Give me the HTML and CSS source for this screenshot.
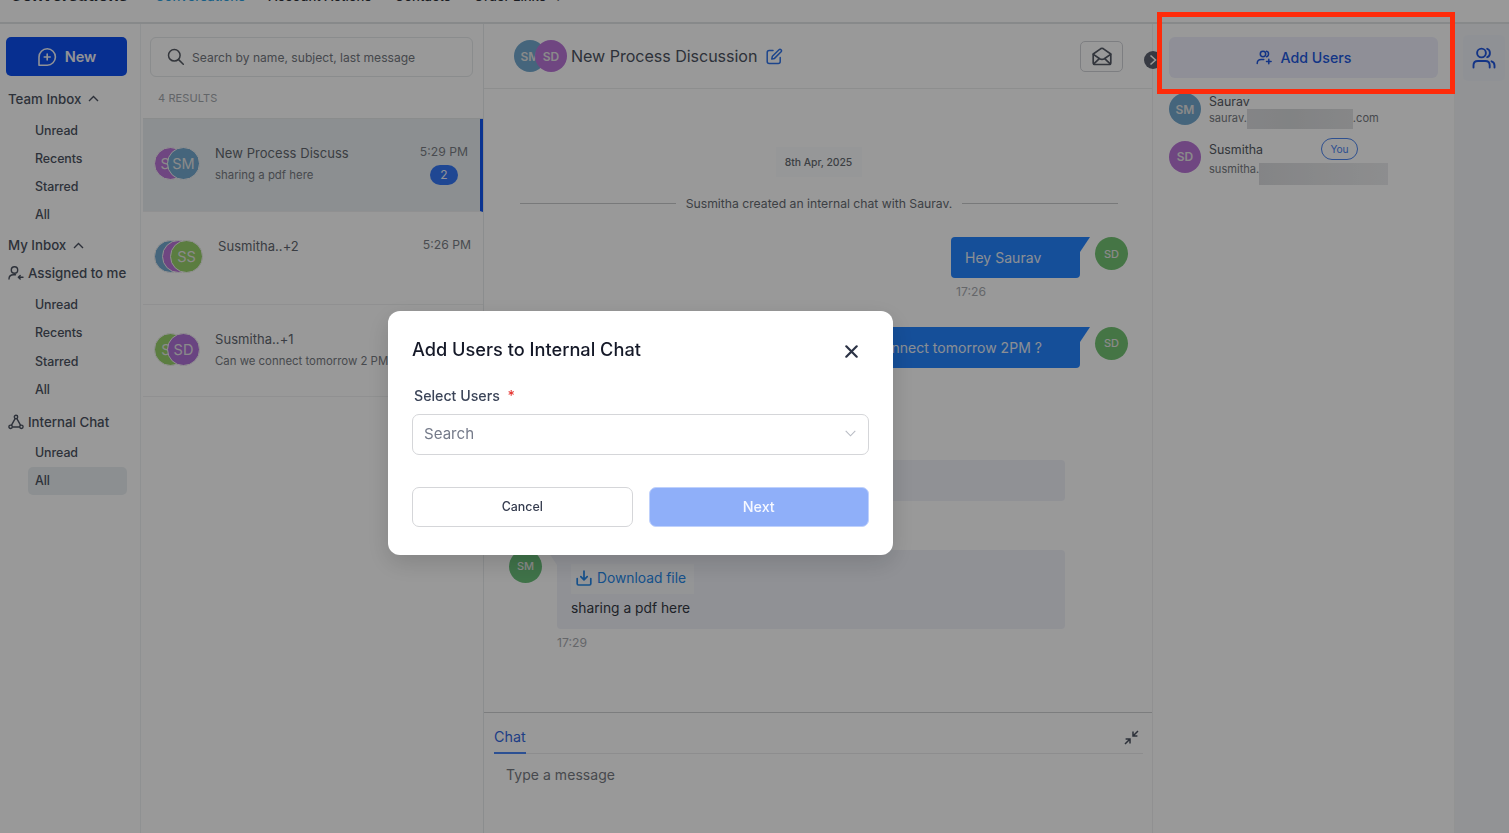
FILE: index.html
```html
<!DOCTYPE html>
<html lang="en">

<head>
  <meta charset="UTF-8">
  <meta name="viewport" content="width=device-width, initial-scale=1.0">
  <title>Conversations</title>
  <link rel="stylesheet" href="styles.css">
</head>

<body>
  <header class="topbar">
    <span class="brand">Conversations</span>
    <nav class="topnav">
      <a class="current">Conversations</a>
      <a>Account Actions</a>
      <a>Contacts</a>
      <a>Order Links &nbsp;⌄</a>
    </nav>
  </header>

  <div class="app">
    <aside class="sidebar">
      <button class="new-btn">
        <svg width="20" height="20" viewBox="0 0 20 20" fill="none" stroke="currentColor" stroke-width="1.6" stroke-linecap="round" stroke-linejoin="round">
          <path d="M2 18.2V10A8.200 8.200 0 1 1 10.200 18.200z" />
          <path d="M10.2 7v6M7.200 10h6" />
        </svg>
        New
      </button>

      <h3>Team Inbox
        <svg class="caret" width="11" height="7" viewBox="0 0 11 7"><path d="M1 6l4.500-4.500L10 6" /></svg>
      </h3>
      <ul>
        <li>Unread</li>
        <li>Recents</li>
        <li>Starred</li>
        <li>All</li>
      </ul>

      <h3 class="my-inbox">My Inbox
        <svg class="caret" width="11" height="7" viewBox="0 0 11 7"><path d="M1 6l4.500-4.500L10 6" /></svg>
      </h3>
      <h3 class="with-icon">
        <svg width="16" height="16" viewBox="0 0 16 16" fill="none" stroke="currentColor" stroke-width="1.4" stroke-linecap="round" stroke-linejoin="round">
          <circle cx="6.500" cy="5" r="3.200" />
          <path d="M1 14c0-2.800 1.700-4.200 4.500-4.200h2M15 12.200h-4.500M12.200 10.400l-1.900 1.800 1.900 1.800" />
        </svg>
        Assigned to me
      </h3>
      <ul>
        <li>Unread</li>
        <li>Recents</li>
        <li>Starred</li>
        <li>All</li>
      </ul>

      <h3 class="with-icon internal">
        <svg width="16" height="16" viewBox="0 0 16 16" fill="none" stroke="currentColor" stroke-width="1.4">
          <circle cx="8" cy="3" r="1.700" />
          <circle cx="2.600" cy="12.800" r="1.700" />
          <circle cx="13.400" cy="12.800" r="1.700" />
          <path d="M7.100 4.600l-3.700 6.700M8.900 4.600l3.700 6.700M4.300 13h7.400" />
        </svg>
        Internal Chat
      </h3>
      <ul>
        <li>Unread</li>
        <li class="active">All</li>
      </ul>
    </aside>

    <section class="threads">
      <div class="search">
        <svg width="18" height="18" viewBox="0 0 18 18" fill="none" stroke="currentColor" stroke-width="1.500" stroke-linecap="round">
          <circle cx="7.300" cy="7.300" r="5.800" />
          <path d="M11.600 11.600l4.700 4.700" />
        </svg>
        Search by name, subject, last message
      </div>
      <div class="results">4 RESULTS</div>

      <div class="thread selected">
        <div class="stack">
          <span class="avatar purple">SD</span>
          <span class="avatar blue">SM</span>
        </div>
        <div class="thread-text">
          <div class="name">New Process Discuss</div>
          <div class="preview">sharing a pdf here</div>
        </div>
        <div class="meta">
          <span>5:29 PM</span>
          <span class="count">2</span>
        </div>
      </div>

      <div class="thread">
        <div class="stack tight">
          <span class="avatar blue"></span>
          <span class="avatar purple"></span>
          <span class="avatar green">SS</span>
        </div>
        <div class="thread-text">
          <div class="name">Susmitha..+2</div>
        </div>
        <div class="meta"><span>5:26 PM</span></div>
      </div>

      <div class="thread">
        <div class="stack">
          <span class="avatar green">SS</span>
          <span class="avatar violet">SD</span>
        </div>
        <div class="thread-text">
          <div class="name">Susmitha..+1</div>
          <div class="preview">Can we connect tomorrow 2 PM to discuss</div>
        </div>
      </div>
    </section>

    <main class="chat">
      <div class="chat-head">
        <span class="avatar blue">SM</span>
        <span class="avatar purple">SD</span>
        <h1>New Process Discussion</h1>
        <svg class="edit" width="17" height="17" viewBox="0 0 17 17" fill="none" stroke="currentColor" stroke-width="1.500" stroke-linecap="round" stroke-linejoin="round">
          <path d="M7 2.500H3.200C2 2.500 1.200 3.300 1.200 4.500v9c0 1.200.8 2 2 2h9c1.200 0 2-.8 2-2V9.500" />
          <path d="M5.800 11l.6-2.800 6.600-6.500c1.400-1.200 3.300.7 2.100 2.100L8.500 10.400z" />
        </svg>
        <button class="mail-btn">
          <svg width="20" height="19" viewBox="0 0 20 19" fill="none" stroke="currentColor" stroke-width="1.700" stroke-linecap="round" stroke-linejoin="round">
            <path d="M1.200 7L8.900 1.600c.7-.4 1.500-.4 2.200 0L18.800 7v8.800c0 1-.7 1.700-1.700 1.700H2.900c-1 0-1.700-.7-1.700-1.700z" />
            <path d="M1.400 7.400l6.300 4.300c1.500.9 3.100.9 4.600 0l6.300-4.300M1.800 16.800l5.500-5.200M18.200 16.800l-5.500-5.200" />
          </svg>
        </button>
        <span class="toggle">
          <svg width="8" height="12" viewBox="0 0 8 12" fill="none" stroke="currentColor" stroke-width="1.600"><path d="M1.500 1.500L6.500 6l-5 4.500" /></svg>
        </span>
      </div>

      <div class="messages">
        <div class="date">8th Apr, 2025</div>
        <div class="system">Susmitha created an internal chat with Saurav.</div>

        <div class="msg out">
          <div>
            <div class="bubble">Hey Saurav</div>
            <div class="time">17:26</div>
          </div>
          <span class="avatar leaf">SD</span>
        </div>
        <div class="msg out">
          <div>
            <div class="bubble">Can we connect tomorrow 2PM ?</div>
            <div class="time">17:26</div>
          </div>
          <span class="avatar leaf">SD</span>
        </div>
        <div class="msg in">
          <span class="avatar mint"></span>
          <div>
            <div class="bubble"></div>
          </div>
        </div>
        <div class="msg in">
          <span class="avatar mint">SM</span>
          <div>
            <div class="bubble file">
              <a class="download">
                <svg width="16" height="17" viewBox="0 0 16 17" fill="none" stroke="currentColor" stroke-width="1.700" stroke-linecap="round" stroke-linejoin="round">
                  <path d="M1.200 8.500v5.200c0 .8.500 1.300 1.300 1.300h11c.8 0 1.300-.5 1.300-1.300V8.500M8 1.200v8.300M4.800 6.700L8 9.900l3.200-3.200" />
                </svg>
                Download file
              </a>
              <div>sharing a pdf here</div>
            </div>
            <div class="time">17:29</div>
          </div>
        </div>
      </div>

      <div class="composer">
        <div class="tabs">
          <span class="tab">Chat</span>
          <svg width="15" height="15" viewBox="0 0 15 15" fill="none" stroke="currentColor" stroke-width="1.500">
            <path d="M14 1L9 6M9 1.600V6h4.400M1 14l5-5M1.600 9H6v4.400" />
          </svg>
        </div>
        <div class="input">Type a message</div>
      </div>
    </main>

    <section class="users">
      <button class="add-btn">
        <svg width="17" height="16" viewBox="0 0 17 16" fill="none" stroke="currentColor" stroke-width="1.500" stroke-linecap="round">
          <circle cx="7" cy="4" r="2.700" />
          <path d="M1.200 13.500c0-2.600 1.500-4 4-4h2.600M10.500 1.300c2.700.5 2.700 4.900 0 5.400M12.800 9.200v4.600M10.500 11.500h4.600" />
        </svg>
        Add Users
      </button>
      <div class="user">
        <span class="avatar blue">SM</span>
        <div>
          <div class="user-name">Saurav</div>
          <div class="email">saurav.<span class="mask"></span>.com</div>
        </div>
      </div>
      <div class="user second">
        <span class="avatar purple">SD</span>
        <div>
          <div class="user-name">Susmitha <span class="you">You</span></div>
          <div class="email">susmitha.<span class="mask wide"></span></div>
        </div>
      </div>
    </section>

    <aside class="rail">
      <span class="rail-btn">
        <svg width="24" height="22" viewBox="0 0 24 22" fill="none" stroke="currentColor" stroke-width="1.900" stroke-linecap="round">
          <circle cx="9.500" cy="6" r="4.400" />
          <path d="M1.500 20.500v-2.200c0-2.700 1.700-4.300 4.400-4.300h7.400c2.700 0 4.400 1.600 4.400 4.300v2.200M15.200 1.800c3.600 1 3.600 7.400 0 8.400M19.500 14.300c1.900.6 3 2 3 4.200v2" />
        </svg>
      </span>
    </aside>
  </div>

  <div class="overlay">
    <div class="modal">
      <div class="modal-head">
        <h2>Add Users to Internal Chat</h2>
        <svg width="13" height="13" viewBox="0 0 13 13" stroke="currentColor" stroke-width="2.200" stroke-linecap="round"><path d="M1.300 1.300l10.400 10.400M11.700 1.300L1.300 11.700" /></svg>
      </div>
      <label>Select Users <b>*</b></label>
      <div class="select">
        Search
        <svg width="11" height="7" viewBox="0 0 11 7" fill="none" stroke="currentColor" stroke-width="1.100"><path d="M.7.8l4.800 5 4.800-5" /></svg>
      </div>
      <div class="actions">
        <button class="cancel">Cancel</button>
        <button class="next">Next</button>
      </div>
    </div>
  </div>
  <div class="highlight"></div>
</body>

</html>
```
FILE: styles.css
```css
* {
  box-sizing: border-box;
}

body {
  margin: 0;
  height: 833px;
  overflow: hidden;
  display: flex;
  flex-direction: column;
  background: #fff;
  color: #4c5361;
  font-family: Inter, "Liberation Sans", sans-serif;
  font-size: 13px;
}

h1, h2, h3, ul {
  margin: 0;
  padding: 0;
  font-weight: 500;
}

button {
  font-family: inherit;
  border: none;
  display: flex;
  align-items: center;
  justify-content: center;
}

svg {
  flex: none;
}

/* top bar, scrolled mostly out of view */
.topbar {
  height: 24px;
  flex: none;
  display: flex;
  border-bottom: 2px solid #e2e5e6;
  line-height: 20px;
  padding-left: 10px;
  overflow: hidden;
  color: #2c3038;
}

.brand {
  width: 145px;
  font-size: 16.6px;
  font-weight: 700;
  margin-top: -15px;
}

.topnav {
  display: flex;
  gap: 23px;
  font-size: 13.1px;
  font-weight: 500;
  margin-top: -14px;
}

.topnav .current {
  color: #2b9fe0;
}

.app {
  flex: 1;
  display: grid;
  grid-template-columns: 141px 343px 669px 302px 54px;
  min-height: 0;
}

/* sidebar */
.sidebar {
  padding: 13px 13px 0 6px;
  border-right: 1px solid #eff2f3;
}

.new-btn {
  width: 121px;
  height: 39px;
  gap: 8px;
  background: #0c4ff0;
  color: #f2f4fa;
  border-radius: 5px;
  font-size: 14.6px;
  font-weight: 600;
}

.sidebar h3 {
  height: 28px;
  display: flex;
  align-items: center;
  gap: 7px;
  padding-left: 2px;
  margin-top: 8.5px;
  font-size: 13.3px;
  letter-spacing: -.02px;
  white-space: nowrap;
}

.sidebar h3.my-inbox {
  margin-top: 2px;
}

.sidebar h3.with-icon {
  margin-top: 0;
  gap: 4px;
}

.sidebar h3.internal {
  margin-top: 4px;
}

.caret {
  fill: none;
  stroke: currentColor;
  stroke-width: 1.4;
}

.sidebar ul {
  list-style: none;
  margin-top: 4px;
  padding-left: 22px;
}

.sidebar li {
  height: 28.2px;
  line-height: 28px;
  padding-left: 7px;
  font-size: 12.4px;
  letter-spacing: -.05px;
  font-weight: 450;
  border-radius: 5px;
}

.sidebar h3.internal + ul {
  margin-top: 3px;
}

.sidebar li.active {
  background: #eaeff2;
  font-weight: 500;
}

/* avatars */
.avatar {
  width: 32px;
  height: 32px;
  flex: none;
  border-radius: 50%;
  display: flex;
  align-items: center;
  justify-content: center;
  color: #e6e6e6;
  font-size: 12px;
  font-weight: 600;
}

.blue { background: #74a9cf; }
.purple { background: #ba75d8; }
.violet { background: #b072d8; }
.green { background: #98d06c; }
.leaf { background: #74c374; }
.mint { background: #6abf7a; }

/* thread list */
.threads {
  border-right: 1px solid #e8ebed;
  padding-left: 2px;
  min-width: 0;
}

.search {
  margin: 13px 10px 0 7px;
  height: 40px;
  border: 1px solid #e6e9eb;
  border-radius: 6px;
  display: flex;
  align-items: center;
  gap: 7px;
  padding-left: 16px;
  font-size: 12.1px;
  color: #747880;
}

.search svg {
  color: #555a63;
}

.results {
  height: 42px;
  padding-left: 15px;
  line-height: 42px;
  font-size: 11px;
  letter-spacing: .1px;
  color: #a4a8ad;
  border-bottom: 1px solid #e6e9ea;
}

.thread {
  height: 92.8px;
  display: flex;
  padding: 0 12px 0 11px;
  border-bottom: 1px solid #f0f1f2;
}

.thread.selected {
  background: #eaeff2;
  border-right: 3px solid #1155f2;
}

.stack {
  display: flex;
  align-items: center;
  width: 61px;
  padding-bottom: 2px;
}

.stack .avatar {
  width: 33px;
  height: 33px;
  border: 1.5px solid #f2f2f2;
  font-size: 14.5px;
  font-weight: 400;
}

.stack .avatar + .avatar {
  margin-left: -20px;
}

.stack.tight {
  width: 64px;
}

.stack.tight .avatar + .avatar {
  margin-left: -25px;
}

.thread-text {
  flex: 1;
  min-width: 0;
  padding-top: 25px;
  white-space: nowrap;
  overflow: hidden;
}

.name {
  font-size: 13px;
  line-height: 19px;
  letter-spacing: .05px;
  color: #62676f;
  font-weight: 430;
}

.preview {
  font-size: 11.4px;
  line-height: 18px;
  margin-top: 3px;
  color: #777b82;
}

.meta {
  display: flex;
  flex-direction: column;
  align-items: center;
  gap: 4px;
  padding-top: 24px;
  line-height: 18px;
  font-size: 12.2px;
  color: #7a7e85;
}

.count {
  width: 28px;
  height: 20px;
  line-height: 20px;
  border-radius: 10px;
  background: #3577f5;
  color: #f2f4fa;
  text-align: center;
  font-size: 12px;
}

/* chat */
.chat {
  display: flex;
  flex-direction: column;
  border-right: 1px solid #f0f1f2;
  min-height: 0;
}

.chat-head {
  height: 65px;
  flex: none;
  display: flex;
  align-items: center;
  padding-left: 30px;
  border-bottom: 1px solid #ebeded;
  position: relative;
}

.chat-head .avatar + .avatar {
  margin-left: -11px;
}

.chat-head h1 {
  font-size: 16.1px;
  font-weight: 400;
  letter-spacing: -.05px;
  margin: 0 9px 0 4px;
}

.edit {
  color: #3174ea;
}

.mail-btn {
  width: 43px;
  height: 31px;
  margin: 0 29px 0 auto;
  padding: 0;
  background: none;
  border: 1px solid #d1d3d8;
  border-radius: 5px;
  color: #555a66;
}

.toggle {
  position: absolute;
  right: -10px;
  top: 27px;
  width: 18px;
  height: 18px;
  border-radius: 50%;
  background: #5c6270;
  color: #fff;
  display: flex;
  align-items: center;
  justify-content: center;
}

.messages {
  flex: 1;
  min-height: 0;
  padding: 58px 24px 0 25px;
  overflow: hidden;
}

.date {
  width: 86px;
  height: 30px;
  line-height: 31px;
  margin: 0 auto;
  text-align: center;
  background: #fafcfd;
  font-size: 10.4px;
  letter-spacing: -.05px;
  font-weight: 500;
  color: #666b72;
}

.system {
  height: 18px;
  margin: 17px 10px 25px 11px;
  display: flex;
  align-items: center;
  gap: 10px;
  font-size: 12.2px;
  white-space: nowrap;
  color: #666b72;
}

.system::before,
.system::after {
  content: "";
  flex: 1;
  height: 1px;
  background: #c8cacc;
}

.msg {
  display: flex;
  height: 89.5px;
}

.msg .avatar {
  font-size: 11px;
  font-weight: 450;
  width: 33px;
  height: 33px;
}

.msg.out {
  justify-content: flex-end;
  gap: 15px;
}

.msg.in {
  padding-top: 44px;
  height: 133.5px;
  gap: 15px;
}

.msg.in + .msg.in {
  padding-top: 0;
}

.bubble {
  position: relative;
  min-width: 129px;
  height: 41px;
  line-height: 41px;
  padding: 0 38px 0 14px;
  border-radius: 4px;
  background: #f0f2f9;
  font-size: 14px;
  letter-spacing: .03px;
}

.out .bubble {
  background: #2484ff;
  color: #e6edf7;
  border-top-right-radius: 0;
}

.out .bubble::after {
  content: "";
  position: absolute;
  top: 0;
  left: 100%;
  border-top: 15px solid #2484ff;
  border-right: 10px solid transparent;
}

.in .bubble {
  width: 508px;
  border-top-left-radius: 0;
}

.in .bubble::before {
  content: "";
  position: absolute;
  top: 0;
  right: 100%;
  border-top: 15px solid #f0f2f9;
  border-left: 10px solid transparent;
}

.in .bubble.file {
  height: 79px;
  padding-top: 14px;
  line-height: 29px;
  color: #343944;
  font-size: 13.8px;
  letter-spacing: 0;
}

.download {
  display: flex;
  align-items: center;
  gap: 5px;
  width: 123px;
  height: 30px;
  padding-left: 5px;
  background: #f7f8fb;
  color: #2587e8;
  white-space: nowrap;
}

.time {
  margin-top: 5px;
  line-height: 18px;
  font-size: 12.2px;
  color: #a8abb0;
}

.out .time {
  padding-left: 5px;
}

.composer {
  height: 121px;
  flex: none;
  border-top: 1px solid #cfd1d3;
  padding: 8px 9px 0 10px;
}

.tabs {
  height: 33px;
  display: flex;
  align-items: center;
  justify-content: space-between;
  border-bottom: 1px solid #ebeced;
  padding-right: 4px;
}

.tab {
  height: 33px;
  line-height: 31px;
  border-bottom: 2px solid #4a86f5;
  color: #3368e0;
  font-size: 14.3px;
}

.input {
  padding: 11px 12px;
  font-size: 14px;
  line-height: 19px;
  letter-spacing: .05px;
  color: #777b82;
}

/* users panel */
.users {
  padding: 13px 17px 0 16px;
  border-right: 1px solid #f4f5f6;
}

.add-btn {
  width: 269px;
  height: 41px;
  gap: 8px;
  border-radius: 6px;
  background: #eeeffc;
  color: #2158df;
  font-size: 14.2px;
  font-weight: 500;
}

.user {
  display: flex;
  gap: 8px;
  height: 47.5px;
  margin-top: 15px;
}

.user.second {
  margin-top: 0;
}

.user-name {
  font-size: 12.4px;
  line-height: 17px;
  display: flex;
  align-items: center;
  height: 17px;
  color: #555a63;
}

.email {
  font-size: 11.1px;
  height: 17px;
  line-height: 17px;
  display: flex;
  align-items: center;
  color: #777b82;
}

.second .email {
  margin-top: 3px;
}

.mask {
  width: 106px;
  height: 20px;
  background: linear-gradient(90deg, #dcdde0, #d8dadc 40%, #e0e1e3);
}

.mask.wide {
  width: 129px;
  height: 22px;
  flex: none;
  margin-top: 10px;
  background: linear-gradient(90deg, #dcdde0, #e4e5e7 50%, #ebecee);
}

.you {
  width: 37px;
  height: 22px;
  margin-left: 58px;
  border: 1px solid #4d85f0;
  border-radius: 11px;
  color: #4d85f0;
  font-size: 10.2px;
  line-height: 20px;
  text-align: center;
}

.rail {
  background: #f3f6f8;
  padding: 11px 0 0 8px;
}

.rail-btn {
  width: 42px;
  height: 46px;
  border-radius: 5px;
  background: #eff2f8;
  color: #2158df;
  display: flex;
  align-items: center;
  justify-content: center;
}

/* modal */
.overlay {
  position: fixed;
  inset: 0;
  background: rgba(0, 0, 0, .4);
  display: flex;
  align-items: flex-start;
  padding: 310.5px 0 0 388px;
}

.modal {
  width: 505px;
  height: 244.5px;
  padding: 24px 24px 25px;
  background: #fff;
  border-radius: 12px;
  box-shadow: 0 8px 24px rgba(0, 0, 0, .15);
}

.modal-head {
  display: flex;
  justify-content: space-between;
  align-items: center;
  height: 28px;
  padding-right: 11px;
  color: #2b3245;
}

.modal-head svg {
  margin-top: 5px;
}

.modal-head h2 {
  font-size: 18.2px;
  color: #151928;
}

.modal label {
  display: block;
  margin: 23px 0 9px 2px;
  font-size: 14.2px;
  line-height: 19px;
  font-weight: 500;
  color: #3b4458;
}

.modal label b {
  margin-left: 4px;
  color: #e5312d;
  font-weight: 500;
}

.select {
  height: 41px;
  border: 1px solid #d5d6d9;
  border-radius: 7px;
  display: flex;
  align-items: center;
  justify-content: space-between;
  padding: 0 12px 1px 11px;
  font-size: 15.1px;
  color: #757b8a;
}

.select svg {
  color: #b8bcc4;
}

.actions {
  display: flex;
  gap: 16px;
  margin-top: 32px;
}

.actions button {
  flex: 1;
  height: 40px;
  border-radius: 7px;
  background: #fff;
  font-size: 12.4px;
  font-weight: 500;
  color: #343b4e;
}

.actions .cancel {
  border: 1px solid #d5d6d9;
}

.actions .next {
  background: #8faff9;
  border: 1px solid #bfd1fc;
  color: #f6f8ff;
  font-size: 14.3px;
}

/* callout frame drawn over everything */
.highlight {
  position: fixed;
  left: 1157px;
  top: 12px;
  width: 298px;
  height: 82px;
  border: 5px solid #ff2b0a;
}
```
